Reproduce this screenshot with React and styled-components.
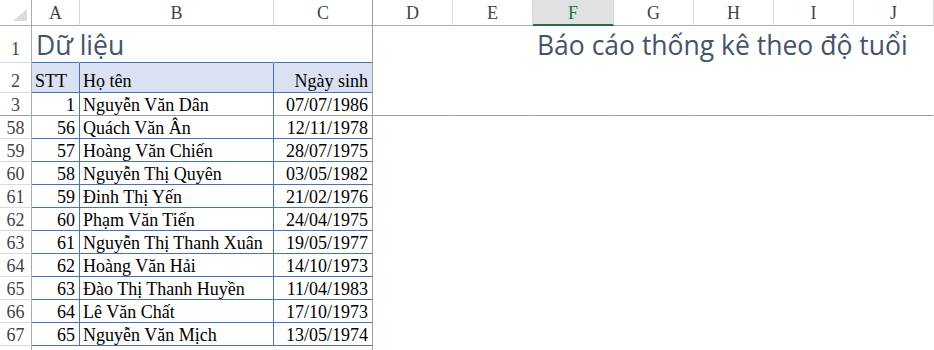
import React from 'react';
import styled, { createGlobalStyle, css } from 'styled-components';

const GlobalStyle = createGlobalStyle`
    html, body {
        margin: 0;
        padding: 0;
        background: #ffffff;
        overflow: hidden;
    }
`

const COLS = '32px 48px 194px 99px 80px 80px 81px 80px 80px 80px 80px';
const BLUE = '#4472c4';
const FREEZE = '#a0a0a0';
const HEAD_LINE = '#ababab';
const HEAD_SEP = '#dadada';

const Sheet = styled.div`
    width: 934px;
    height: 350px;
    overflow: hidden;
    display: flex;
    flex-direction: column;
    background: #ffffff;
`

const GridRow = styled.div`
    display: grid;
    grid-template-columns: ${COLS};
    height: ${p => p.$h}px;
    flex-shrink: 0;
`

const Corner = styled.div`
    box-sizing: border-box;
    border-right: 1px solid ${HEAD_LINE};
    border-bottom: 1px solid ${HEAD_LINE};
    display: flex;
    align-items: flex-end;
    justify-content: flex-end;
    padding: 0 4px 4px 0;
`

const ColHead = styled.div`
    box-sizing: border-box;
    display: flex;
    align-items: center;
    justify-content: center;
    border-right: 1px solid ${p => p.$freeze ? FREEZE : HEAD_SEP};
    border-bottom: 1px solid ${HEAD_LINE};
    font-family: "Liberation Serif", serif;
    font-size: 18px;
    color: #444444;
    padding-top: 2px;
    ${p => p.$selected && css`
        background: #e1e1e1;
        color: #217346;
        border-bottom: 2px solid #217346;
        padding-top: 3px;
    `}
`

const RowHead = styled.div`
    box-sizing: border-box;
    display: flex;
    align-items: flex-end;
    justify-content: center;
    border-right: 1px solid ${HEAD_LINE};
    border-bottom: 1px solid ${p => p.$freeze ? FREEZE : HEAD_SEP};
    font-family: "Liberation Serif", serif;
    font-size: 18px;
    line-height: 20px;
    color: #444444;
    padding-bottom: ${p => p.$pb ?? 0}px;
`

const Cell = styled.div`
    box-sizing: border-box;
    display: flex;
    align-items: flex-end;
    justify-content: ${p => p.$align === 'right' ? 'flex-end' : 'flex-start'};
    border-right: 1px solid ${p => p.$br || 'transparent'};
    border-bottom: 1px solid ${p => p.$bb || 'transparent'};
    background: ${p => p.$fill || 'transparent'};
    padding: 0 ${p => p.$align === 'right' ? 4 : 0}px ${p => p.$pb ?? 0}px ${p => p.$align === 'right' ? 0 : 3}px;
    font-family: "Liberation Serif", serif;
    font-size: 18px;
    line-height: 20px;
    color: #000000;
    white-space: nowrap;
    min-width: 0;
`

const Title = styled.span`
    font-family: "Open Sans", "Noto Sans", sans-serif;
    font-size: 26.5px;
    line-height: 32px;
    color: #44546a;
    white-space: nowrap;
    margin-left: 1px;
`

const letters = ['A', 'B', 'C', 'D', 'E', 'F', 'G', 'H', 'I', 'J'];

const first = [1, 'Nguyễn Văn Dân', '07/07/1986'];

const people = [
    [58, 56, 'Quách Văn Ân', '12/11/1978'],
    [59, 57, 'Hoàng Văn Chiến', '28/07/1975'],
    [60, 58, 'Nguyễn Thị Quyên', '03/05/1982'],
    [61, 59, 'Đinh Thị Yến', '21/02/1976'],
    [62, 60, 'Phạm Văn Tiến', '24/04/1975'],
    [63, 61, 'Nguyễn Thị Thanh Xuân', '19/05/1977'],
    [64, 62, 'Hoàng Văn Hải', '14/10/1973'],
    [65, 63, 'Đào Thị Thanh Huyền', '11/04/1983'],
    [66, 64, 'Lê Văn Chất', '17/10/1973'],
    [67, 65, 'Nguyễn Văn Mịch', '13/05/1974'],
];

function EmptyRight({ bb, count = 7 }) {
    return Array.from({ length: count }, (_, i) => <Cell key={i} $bb={bb} />);
}

function DataRow({ num, stt, name, date, freeze }) {
    const bb = freeze ? FREEZE : BLUE;
    return (
        <GridRow $h={23}>
            <RowHead $freeze={freeze}>{num}</RowHead>
            <Cell $align="right" $br={BLUE} $bb={bb}>{stt}</Cell>
            <Cell $br={BLUE} $bb={bb}>{name}</Cell>
            <Cell $align="right" $br={FREEZE} $bb={bb}>{date}</Cell>
            <EmptyRight bb={freeze ? FREEZE : null} />
        </GridRow>
    );
}

export default function App() {
    return (<>
        <GlobalStyle />
        <Sheet>
            <GridRow $h={24}>
                <Corner>
                    <svg width="14" height="12" viewBox="0 0 14 12">
                        <polygon points="14,0 14,12 0,12" fill="#dcdcdc" />
                    </svg>
                </Corner>
                {letters.map(l => <ColHead key={l} $freeze={l === 'C'} $selected={l === 'F'}>{l}</ColHead>)}
            </GridRow>

            <GridRow $h={39}>
                <RowHead $pb={3}>1</RowHead>
                <Cell $bb={BLUE} $pb={1}><Title>Dữ liệu</Title></Cell>
                <Cell $bb={BLUE} />
                <Cell $bb={BLUE} $br={FREEZE} />
                <Cell />
                <Cell />
                <Cell $pb={1}><Title>Báo cáo thống kê theo độ tuổi</Title></Cell>
                <Cell />
                <Cell />
                <Cell />
                <Cell />
            </GridRow>

            <GridRow $h={30}>
                <RowHead $pb={1}>2</RowHead>
                <Cell $fill="#d9e1f2" $br={BLUE} $bb={BLUE} $pb={1}>STT</Cell>
                <Cell $fill="#d9e1f2" $br={BLUE} $bb={BLUE} $pb={1}>Họ tên</Cell>
                <Cell $fill="#d9e1f2" $align="right" $br={FREEZE} $bb={BLUE} $pb={1}>Ngày sinh</Cell>
                <EmptyRight />
            </GridRow>

            <DataRow num={3} stt={first[0]} name={first[1]} date={first[2]} freeze />

            {people.map(([num, stt, name, date]) => (
                <DataRow key={num} num={num} stt={stt} name={name} date={date} />
            ))}

            <GridRow $h={10}>
                <RowHead />
                <Cell />
                <Cell />
                <Cell $br={FREEZE} />
                <EmptyRight />
            </GridRow>
        </Sheet>
    </>);
}
